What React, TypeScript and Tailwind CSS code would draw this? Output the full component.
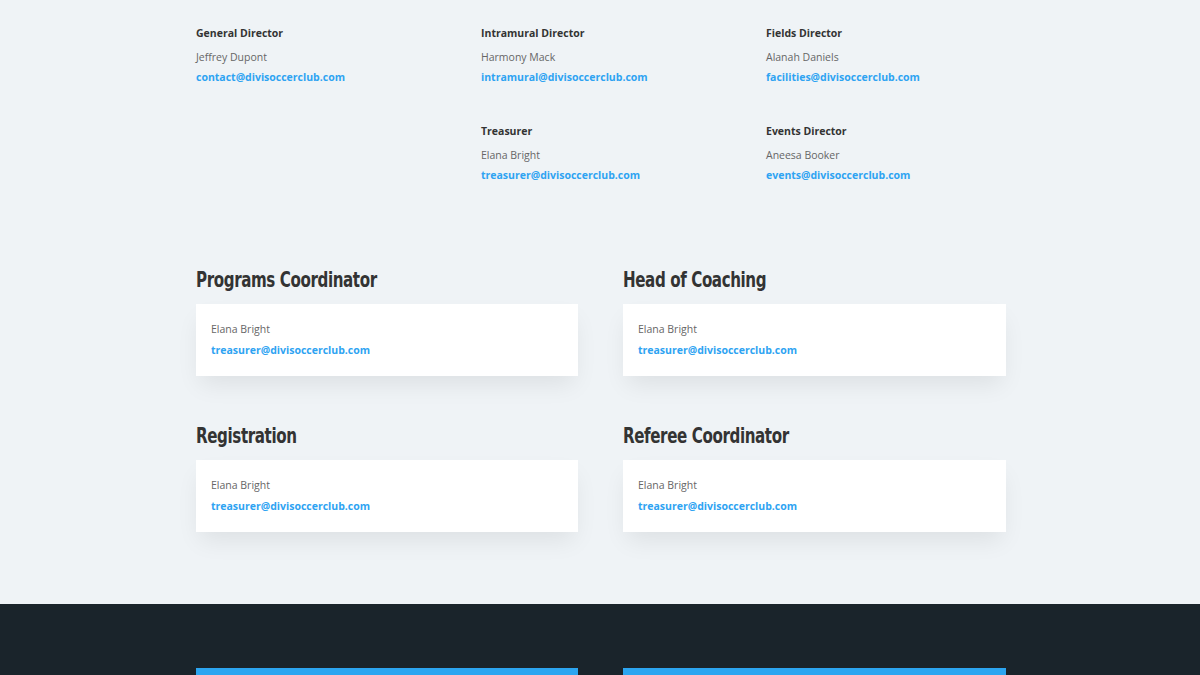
import React from "react";

const top = [
  [
    { t: "General Director", n: "Jeffrey Dupont", e: "contact@divisoccerclub.com" },
    { t: "Intramural Director", n: "Harmony Mack", e: "intramural@divisoccerclub.com" },
    { t: "Fields Director", n: "Alanah Daniels", e: "facilities@divisoccerclub.com" },
  ],
  [
    null,
    { t: "Treasurer", n: "Elana Bright", e: "treasurer@divisoccerclub.com" },
    { t: "Events Director", n: "Aneesa Booker", e: "events@divisoccerclub.com" },
  ],
];

const cards = ["Programs Coordinator", "Head of Coaching", "Registration", "Referee Coordinator"];

export default function App() {
  return (
    <div className="w-full min-h-[675px] bg-[#eff3f6] font-['Open_Sans',sans-serif]">
      <div className="w-[812px] mx-auto pl-[2px] pt-[24px] pb-[72px]">
        <div className="grid grid-cols-3 gap-x-[45px] gap-y-[35px]">
          {top.flat().map((p, i) =>
            p ? (
              <div key={i}>
                <div className="text-[10.5px] font-bold leading-[18px] text-[#333]">{p.t}</div>
                <div className="mt-[5px] text-[10.5px] leading-[20px] text-[#666]">{p.n}</div>
                <div className="text-[10.5px] font-bold leading-[20px] text-[#2ea3f2]">{p.e}</div>
              </div>
            ) : (
              <div key={i} />
            )
          )}
        </div>
        <div className="mt-[80px] grid grid-cols-[382px_383px] gap-x-[45px] gap-y-[45px]">
          {cards.map((c) => (
            <div key={c}>
              <h2 className="w-max whitespace-nowrap origin-left scale-x-[0.8] translate-y-[1px] font-['DejaVu_Sans_Condensed','DejaVu_Sans',sans-serif] [font-stretch:condensed] font-bold text-[21px] leading-[28px] tracking-[-0.5px] text-[#333]">
                {c}
              </h2>
              <div className="mt-[11px] bg-white px-[15px] pt-[15px] pb-[16px] shadow-[0_12px_24px_-4px_rgba(0,0,0,0.08)]">
                <div className="text-[10.5px] leading-[20px] text-[#666]">Elana Bright</div>
                <div className="mt-[1px] text-[10.5px] font-bold leading-[20px] text-[#2ea3f2]">treasurer@divisoccerclub.com</div>
              </div>
            </div>
          ))}
        </div>
      </div>
      <div className="bg-[#1a242b] pt-[64px] pb-[40px]">
        <div className="w-[812px] mx-auto pl-[2px] grid grid-cols-[382px_383px] gap-x-[45px]">
          <div className="h-[60px] bg-[#2ca5f0]" />
          <div className="h-[60px] bg-[#2ca5f0]" />
        </div>
      </div>
    </div>
  );
}
